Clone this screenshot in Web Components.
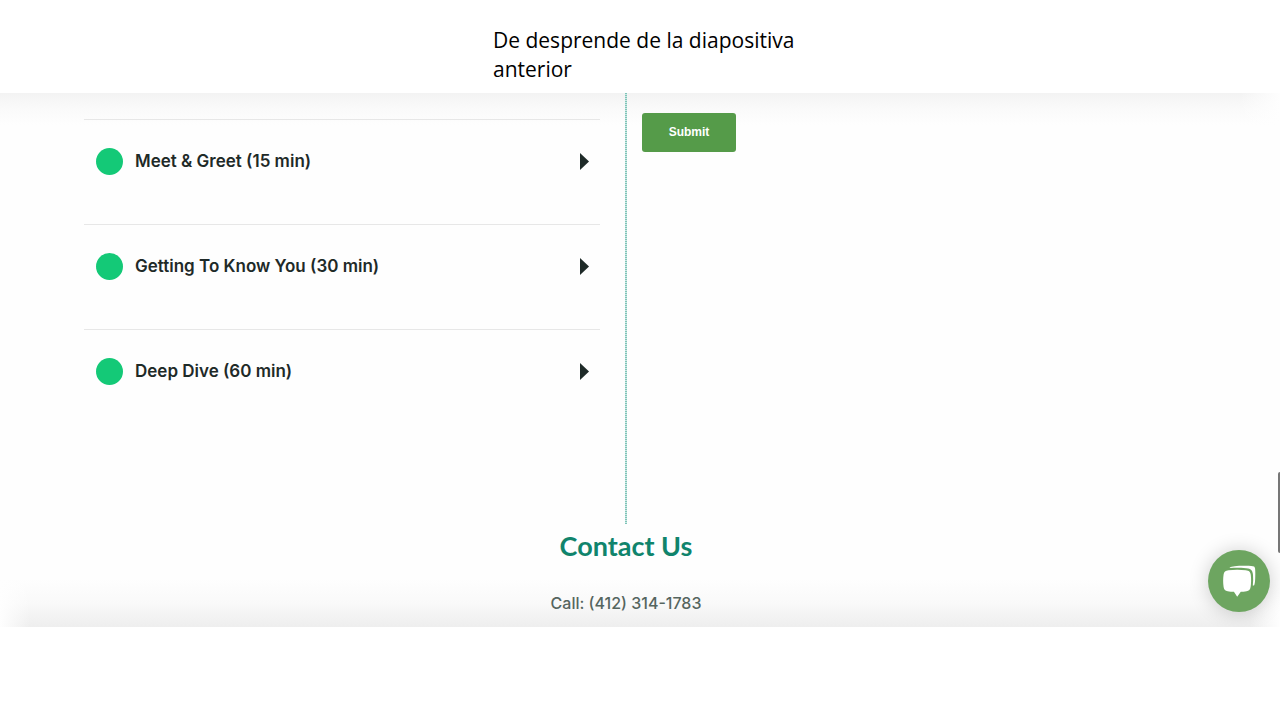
<!DOCTYPE html>
<html lang="en">
<head>
<meta charset="utf-8">
<meta name="viewport" content="width=device-width, initial-scale=1">
<title>Contact Us</title>
<style>
  body { margin: 0; min-height: 100vh; background: #fff; font-family: Inter, sans-serif; }
</style>
</head>
<body>
<slide-caption>De desprende de la diapositiva anterior</slide-caption>
<site-section>
  <meeting-list slot="meetings">
    <meeting-type>Meet &amp; Greet (15 min)</meeting-type>
    <meeting-type>Getting To Know You (30 min)</meeting-type>
    <meeting-type>Deep Dive (60 min)</meeting-type>
  </meeting-list>
  <submit-button slot="form">Submit</submit-button>
  <contact-block slot="contact" phone="(412) 314-1783">Contact Us</contact-block>
  <chat-launcher slot="overlay"></chat-launcher>
</site-section>

<script>
function define(name, html, setup) {
  const template = document.createElement('template');
  template.innerHTML = html;
  customElements.define(name, class extends HTMLElement {
    constructor() {
      super();
      this.attachShadow({ mode: 'open' }).append(template.content.cloneNode(true));
    }
    connectedCallback() { if (setup) setup(this, this.shadowRoot); }
  });
}

define('slide-caption', `
  <style>
    :host { display: flex; justify-content: center; padding: 26px 0 9px; background: #fff; }
    p { margin: 0; width: 320px; padding-left: 26px; font: 21px/29px "Open Sans", sans-serif; color: #000; }
  </style>
  <p><slot></slot></p>`);

define('site-section', `
  <style>
    :host {
      display: block; position: relative; overflow: hidden;
      background:
        linear-gradient(to right, #fefefe, transparent 30px, transparent calc(100% - 30px), #fefefe) bottom / 100% 48px no-repeat,
        linear-gradient(to right, transparent calc(100% - 40px), #fefefe) top / 100% 34px no-repeat,
        linear-gradient(#f3f3f3, #fafafa 50%, #fefefe) top / 100% 32px no-repeat,
        linear-gradient(#fefefe, #f9f9f9 50%, #eeeeee) bottom / 100% 48px no-repeat,
        #fefefe;
    }
    .content { padding: 0 112px 0 84px; }
    .columns { display: grid; grid-template-columns: 1fr 2px 1fr; }
    .meetings { padding: 26px 25px 90px 0; }
    .rule { background: repeating-linear-gradient(#7fc4b8 0 1px, #cbe8e3 1px 2px); }
    .form { padding: 20px 0 0 15px; }
    .thumb {
      position: absolute; right: 0; bottom: 74px; width: 2px; height: 81px;
      background: #777; border-radius: 2px 0 0 2px;
    }
    .overlay { position: absolute; right: 10px; bottom: 15px; }
  </style>
  <div class="content">
    <div class="columns">
      <div class="meetings"><slot name="meetings"></slot></div>
      <div class="rule"></div>
      <div class="form"><slot name="form"></slot></div>
    </div>
    <slot name="contact"></slot>
  </div>
  <div class="thumb"></div>
  <div class="overlay"><slot name="overlay"></slot></div>`);

define('meeting-list', `
  <style>:host { display: flex; flex-direction: column; }</style>
  <slot></slot>`);

define('meeting-type', `
  <style>
    :host { display: block; height: 104px; border-top: 1px solid #e7e7e7; }
    a {
      display: flex; align-items: center; gap: 12px; padding: 28px 11px 0 12px;
      color: #1e2a28; text-decoration: none; font: 600 17px/27px Inter, sans-serif;
    }
    .dot { width: 27px; height: 27px; border-radius: 50%; background: #14c977; }
    .name { flex: 1; }
    svg { display: block; }
  </style>
  <a href="#">
    <span class="dot"></span>
    <span class="name"><slot></slot></span>
    <svg width="9" height="17" viewBox="0 0 9 17" aria-hidden="true"><path d="M0 0 9 8.5 0 17z" fill="#1e2a28"/></svg>
  </a>`);

define('submit-button', `
  <style>
    :host { display: block; }
    button {
      display: block; width: 94px; height: 39px; padding: 0 0 2px; border: 0; border-radius: 3px;
      background: #559b49; color: #fff; font: 700 12px/16px "Liberation Sans", sans-serif;
    }
  </style>
  <button type="button"><slot></slot></button>`);

define('contact-block', `
  <style>
    :host { display: flex; flex-direction: column; align-items: center; gap: 29px; padding: 6px 0 12px; text-align: center; }
    h2 { margin: 0; font: 700 27px/32px Lato, sans-serif; color: #10846c; }
    p { margin: 0; font: 500 16px/24px Inter, sans-serif; color: #55655f; }
    a { color: inherit; text-decoration: none; }
  </style>
  <h2><slot></slot></h2>
  <p>Call: <a></a></p>`, (host, root) => {
  const phone = host.getAttribute('phone');
  const link = root.querySelector('a');
  link.textContent = phone;
  link.href = 'tel:' + phone.replace(/\D/g, '');
});

define('chat-launcher', `
  <style>
    :host { display: block; }
    button {
      display: block; width: 62px; height: 62px; padding: 0; border: 0; border-radius: 50%;
      background: #6da560; box-shadow: 0 1px 20px rgba(0, 0, 0, .2);
    }
    svg { display: block; }
  </style>
  <button type="button" aria-label="Open chat">
    <svg width="62" height="62" viewBox="0 0 62 62" aria-hidden="true">
      <path fill="#fff" d="M21.500 18C22.500 16.500 26 15.900 34 15.700c7-.1 10.600 0 12 .9 1 .8 1.300 2 1.300 6.400 0 6-.2 10.500-1 12-.3.600-.9.700-1.500.4.400-3.700.5-7 .2-10.500-.300-4-1.700-5.900-4.800-6.500C36 17.600 29 17.500 21.500 18z"/>
      <path fill="#fff" d="M20.500 20.300c5.300-.8 11.500-.8 17.200-.1 3.400.4 4.700 1.600 5.100 4.700.500 4 .4 8.500-.2 12-.4 2.700-1.600 3.800-4.100 4.300-2 .3-4 .5-5.700.6L29.200 46.800l-3.300-5c-2 0-4.500-.2-6.200-.6-2.500-.5-3.700-1.600-4.100-4.200-.6-4-.6-8.500 0-12.400.4-2.700 1.700-3.900 4.900-4.300z"/>
    </svg>
  </button>`);
</script>
</body>
</html>
